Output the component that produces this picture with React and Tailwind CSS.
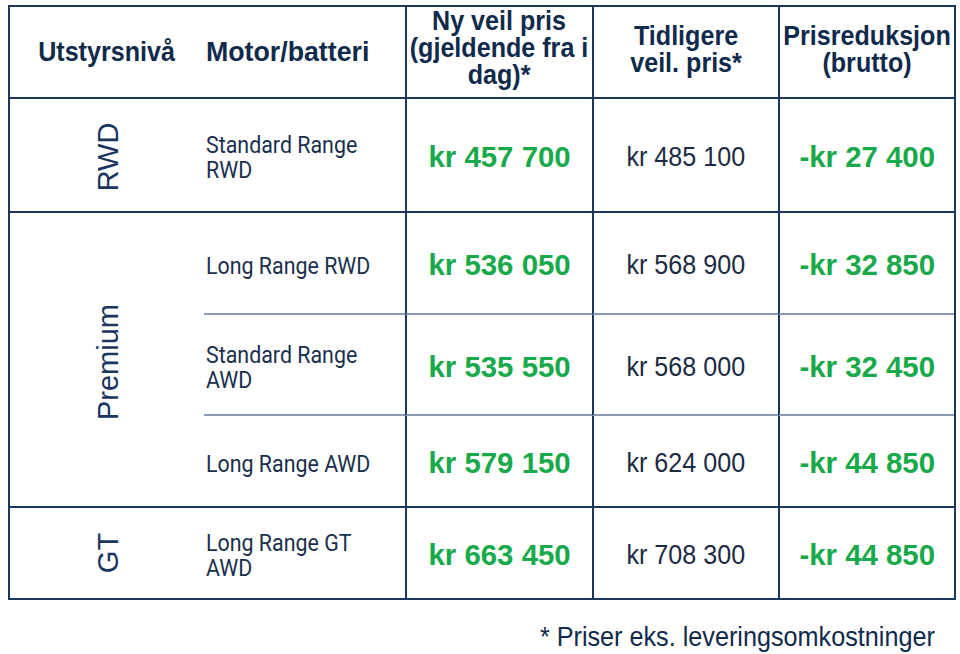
import React from "react";

const DARK = "border-[#1b365d]";

function H({ children, className = "" }) {
  return (
    <span
      className={
        "inline-block whitespace-nowrap scale-x-[0.93] text-center font-bold text-[27px] leading-[27px] text-[#102a4c] " +
        className
      }
    >
      {children}
    </span>
  );
}

function Green({ children }) {
  return (
    <span className="inline-block whitespace-nowrap scale-x-[0.98] font-bold text-[30px] leading-[32px] text-[#18a94a]">
      {children}
    </span>
  );
}

function Reg({ children }) {
  return (
    <span className="inline-block whitespace-nowrap scale-x-[0.93] text-[27px] leading-[30px] text-[#1b2b44]">
      {children}
    </span>
  );
}

function Motor({ children }) {
  return (
    <span className="inline-block whitespace-nowrap origin-left scale-x-[0.93] font-['Roboto',sans-serif] text-[23px] leading-[25px] text-[#1a2f4e]">
      {children}
    </span>
  );
}

function Vert({ children }) {
  return (
    <span className="inline-block whitespace-nowrap -rotate-90 text-[29px] leading-[30px] text-[#1a3560]">
      {children}
    </span>
  );
}

function PriceRow({ motor, ny, old, red, bottom }) {
  const b =
    bottom === "light"
      ? "border-b-2 border-b-[#8c9bb3]"
      : bottom === "dark"
      ? "border-b-2 border-b-[#1b365d]"
      : "";
  return (
    <>
      <div className={"flex items-center pl-[2px] pt-[8px] " + b}>
        <div>{motor}</div>
      </div>
      <div className={"flex items-center justify-center pt-[4px] border-l-2 border-l-[#1b365d] " + b}>
        <Green>{ny}</Green>
      </div>
      <div className={"flex items-center justify-center pt-[4px] border-l-2 border-l-[#1b365d] " + b}>
        <Reg>{old}</Reg>
      </div>
      <div className={"flex items-center justify-center pt-[4px] border-l-2 border-l-[#1b365d] " + b}>
        <Green>{red}</Green>
      </div>
    </>
  );
}

export default function App() {
  return (
    <div className="w-[960px] h-[654px] bg-white font-['Liberation_Sans',Arial,sans-serif] pt-[5px] overflow-hidden">
      <div className={"ml-[8px] w-[948px] border-2 " + DARK}>
        <div className="grid grid-cols-[194px_201px_187px_186px_176px] grid-rows-[92px_114px_102px_101px_92px_90px]">
          {/* header */}
          <div className={"flex items-center justify-center border-b-2 " + DARK}>
            <H>Utstyrsnivå</H>
          </div>
          <div className={"flex items-center pl-[2px] border-b-2 " + DARK}>
            <H className="origin-left scale-x-[0.99]">Motor/batteri</H>
          </div>
          <div className={"flex items-center justify-center border-b-2 border-l-2 pb-[8px] " + DARK}>
            <H>
              Ny veil pris
              <br />
              (gjeldende fra i
              <br />
              dag)*
            </H>
          </div>
          <div className={"flex items-center justify-center border-b-2 border-l-2 pb-[4px] " + DARK}>
            <H>
              Tidligere
              <br />
              veil. pris*
            </H>
          </div>
          <div className={"flex items-center justify-center border-b-2 border-l-2 pb-[4px] " + DARK}>
            <H>
              Prisreduksjon
              <br />
              (brutto)
            </H>
          </div>

          {/* RWD */}
          <div className={"flex items-center justify-center border-b-2 pl-[2px] pt-[4px] " + DARK}>
            <Vert>RWD</Vert>
          </div>
          <PriceRow
            motor={
              <Motor>
                Standard Range
                <br />
                RWD
              </Motor>
            }
            ny="kr 457 700"
            old="kr 485 100"
            red="-kr 27 400"
            bottom="dark"
          />

          {/* Premium */}
          <div className={"row-span-3 flex items-center justify-center border-b-2 pl-[2px] pt-[4px] " + DARK}>
            <Vert>Premium</Vert>
          </div>
          <PriceRow
            motor={<Motor>Long Range RWD</Motor>}
            ny="kr 536 050"
            old="kr 568 900"
            red="-kr 32 850"
            bottom="light"
          />
          <PriceRow
            motor={
              <Motor>
                Standard Range
                <br />
                AWD
              </Motor>
            }
            ny="kr 535 550"
            old="kr 568 000"
            red="-kr 32 450"
            bottom="light"
          />
          <PriceRow
            motor={<Motor>Long Range AWD</Motor>}
            ny="kr 579 150"
            old="kr 624 000"
            red="-kr 44 850"
            bottom="dark"
          />

          {/* GT */}
          <div className="flex items-center justify-center pl-[2px]">
            <Vert>GT</Vert>
          </div>
          <PriceRow
            motor={
              <Motor>
                Long Range GT
                <br />
                AWD
              </Motor>
            }
            ny="kr 663 450"
            old="kr 708 300"
            red="-kr 44 850"
            bottom="none"
          />
        </div>
      </div>
      <div className="mt-[21px] flex justify-end pr-[25px]">
        <span className="inline-block whitespace-nowrap origin-right scale-x-90 text-[28px] leading-[32px] text-[#102a4c]">
          * Priser eks. leveringsomkostninger
        </span>
      </div>
    </div>
  );
}
